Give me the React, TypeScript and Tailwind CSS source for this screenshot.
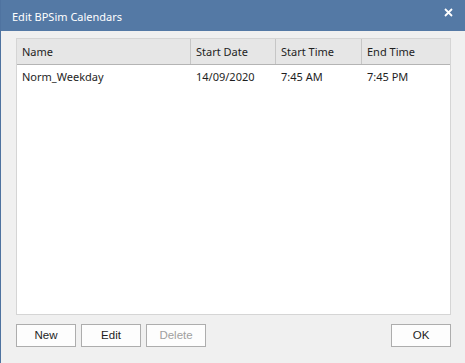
import React from "react";

export default function App() {
  const cols = [
    { label: "Name", w: "w-[174px]" },
    { label: "Start Date", w: "w-[85px]" },
    { label: "Start Time", w: "w-[86px]" },
    { label: "End Time", w: "flex-1" },
  ];
  const row = ["Norm_Weekday", "14/09/2020", "7:45 AM", "7:45 PM"];
  const btn =
    "h-[23px] border border-[#adadad] bg-[#fdfdfd] text-[11.5px] text-[#1e1e1e] flex items-center justify-center";
  return (
    <div
      className="w-[465px] h-[363px] flex flex-col bg-[#f0f0f0] border-l border-[#4f73a0]"
      style={{ fontFamily: '"Noto Sans", "Open Sans", sans-serif' }}
    >
      <div className="h-[31px] bg-[#5479a5] flex items-center justify-between pl-[11px] pr-[12px] pt-[3px] shrink-0">
        <span className="text-white text-[11px]">Edit BPSim Calendars</span>
        <svg width="9" height="9" viewBox="0 0 9 9" className="mb-[10px]">
          <path d="M1 1 L8 8 M8 1 L1 8" stroke="white" strokeWidth="1.8" />
        </svg>
      </div>
      <div className="flex flex-col pl-[15px] pr-[14px] pt-[7px]">
        <div className="h-[277px] border border-[#d5d5d5] bg-white flex flex-col">
          <div className="h-[26px] bg-[#e6e6e6] border-b border-[#b4b4b4] flex text-[11px] text-[#1e1e1e]">
            {cols.map((c, i) => (
              <div
                key={c.label}
                className={`${c.w} h-full flex items-center pl-[5px] pt-[2px] ${
                  i < 3 ? "border-r border-[#c6c6c6]" : ""
                }`}
              >
                {c.label}
              </div>
            ))}
          </div>
          <div className="h-[22px] flex text-[11px] text-[#1e1e1e]">
            {row.map((t, i) => (
              <div
                key={i}
                className={`${cols[i].w} h-full flex items-center pl-[5px] pt-[2px] ${i < 3 ? "pr-px" : ""}`}
              >
                {t}
              </div>
            ))}
          </div>
        </div>
        <div
          className="flex mt-[9px]"
          style={{ fontFamily: '"Liberation Sans", Arial, sans-serif' }}
        >
          <div className={`${btn} w-[60px]`}>New</div>
          <div className={`${btn} w-[60px] ml-[5px]`}>Edit</div>
          <div className={`${btn} w-[60px] ml-[5px] text-[#a0a0a0]`}>Delete</div>
          <div className={`${btn} w-[60px] ml-auto`}>OK</div>
        </div>
      </div>
    </div>
  );
}
